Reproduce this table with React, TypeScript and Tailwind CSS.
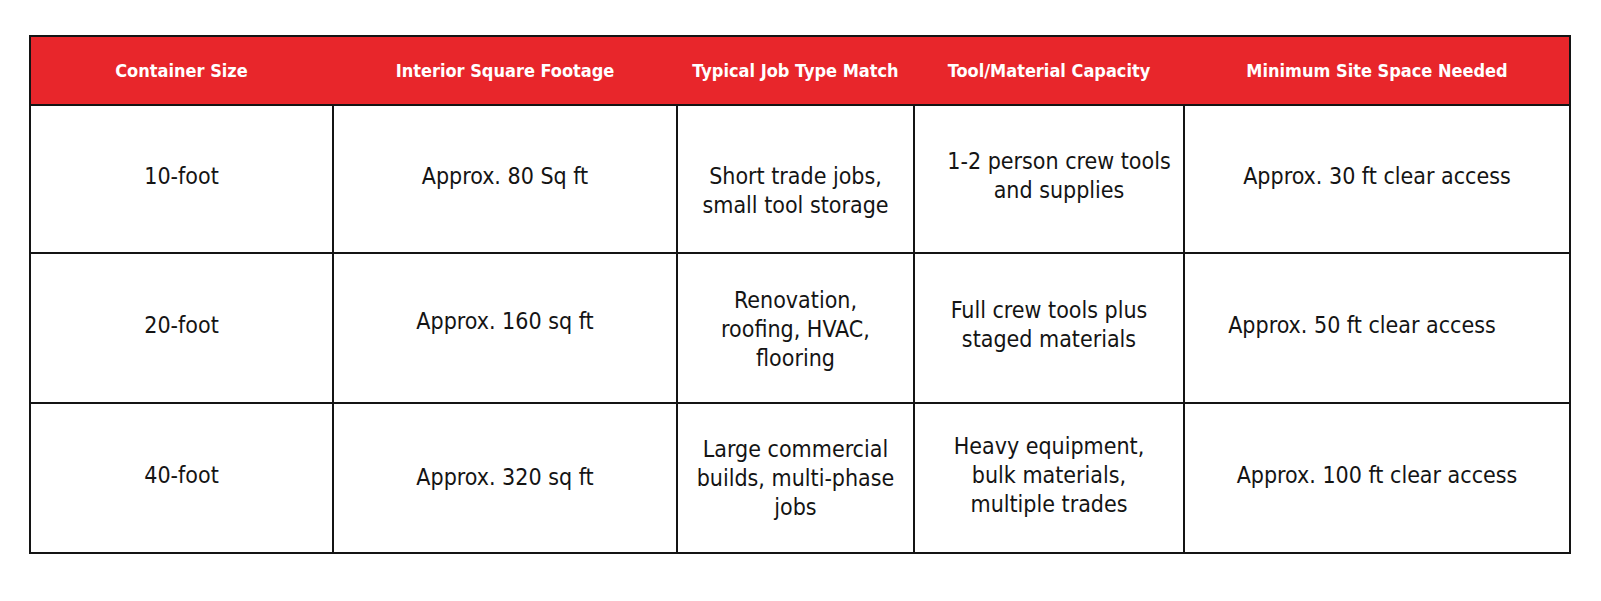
import React from "react";

const cols = ["w-[303px]", "w-[344px]", "w-[237px]", "w-[270px]", "w-[384px]"];

const headers = [
  "Container Size",
  "Interior Square Footage",
  "Typical Job Type Match",
  "Tool/Material Capacity",
  "Minimum Site Space Needed",
];

const rows: { h: string; cells: { lines: string[]; pad: string }[] }[] = [
  {
    h: "h-[148px]",
    cells: [
      { lines: ["10-foot"], pad: "pb-[6px]" },
      { lines: ["Approx. 80 Sq ft"], pad: "pb-[6px]" },
      { lines: ["Short trade jobs,", "small tool storage"], pad: "pt-[24px]" },
      { lines: ["1-2 person crew tools", "and supplies"], pad: "pb-[6px] pl-[20px]" },
      { lines: ["Approx. 30 ft clear access"], pad: "pb-[6px]" },
    ],
  },
  {
    h: "h-[150px]",
    cells: [
      { lines: ["20-foot"], pad: "pb-[6px]" },
      { lines: ["Approx. 160 sq ft"], pad: "pb-[14px]" },
      { lines: ["Renovation,", "roofing, HVAC,", "flooring"], pad: "pt-[2px]" },
      { lines: ["Full crew tools plus", "staged materials"], pad: "pb-[6px]" },
      { lines: ["Approx. 50 ft clear access"], pad: "pb-[6px] pr-[30px]" },
    ],
  },
  {
    h: "h-[148px]",
    cells: [
      { lines: ["40-foot"], pad: "pb-[6px]" },
      { lines: ["Approx. 320 sq ft"], pad: "pb-[2px]" },
      { lines: ["Large commercial", "builds, multi-phase", "jobs"], pad: "pb-0" },
      { lines: ["Heavy equipment,", "bulk materials,", "multiple trades"], pad: "pb-[6px]" },
      { lines: ["Approx. 100 ft clear access"], pad: "pb-[6px]" },
    ],
  },
];

export default function App() {
  return (
    <div
      className="w-[1601px] h-[601px] bg-white pt-[35px] pl-[29px]"
      style={{ fontFamily: '"DejaVu Sans Condensed", "DejaVu Sans", sans-serif' }}
    >
      <div className="w-[1542px] border-2 border-[#141414]">
        <div className="flex h-[69px] bg-[#e8262b] border-b-2 border-[#141414]">
          {headers.map((t, i) => (
            <div
              key={i}
              className={`${cols[i]} ${i < 4 ? "pr-[2px]" : ""} flex items-center justify-center text-white font-bold text-[18px] leading-none whitespace-nowrap`}
            >
              {t}
            </div>
          ))}
        </div>
        {rows.map((r, ri) => (
          <div
            key={ri}
            className={`flex ${r.h} ${ri < 2 ? "border-b-2 border-[#141414]" : ""}`}
          >
            {r.cells.map((c, ci) => (
              <div
                key={ci}
                className={`${cols[ci]} ${ci < 4 ? "border-r-2 border-[#141414]" : ""} ${c.pad} flex flex-col items-center justify-center text-[#141414] text-[23px] leading-[29px] text-center whitespace-nowrap`}
              >
                {c.lines.map((l, li) => (
                  <span key={li}>{l}</span>
                ))}
              </div>
            ))}
          </div>
        ))}
      </div>
    </div>
  );
}
